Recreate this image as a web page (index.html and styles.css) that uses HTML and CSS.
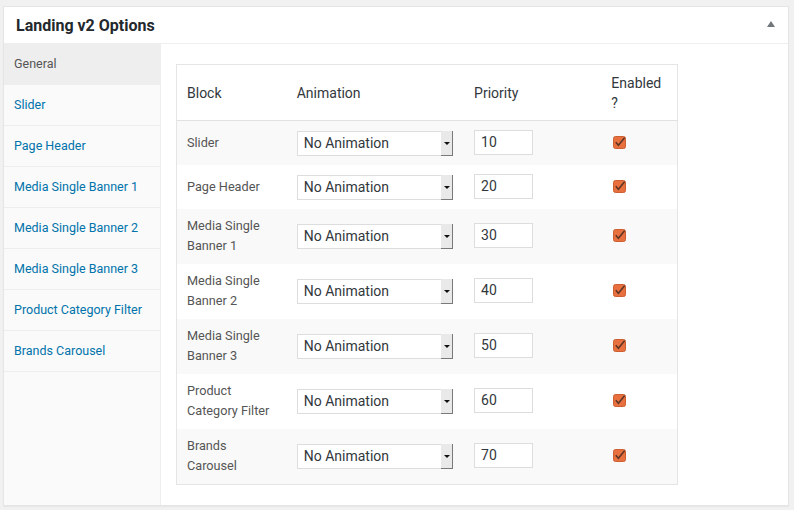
FILE: index.html
```html
<!DOCTYPE html>
<html>
<head>
<meta charset="utf-8">
<link rel="stylesheet" href="styles.css">
</head>
<body>
<div class="postbox">
  <div class="postbox-header">
    <h2 class="postbox-title">Landing v2 Options</h2>
    <span class="toggle-arrow"></span>
  </div>
  <div class="postbox-body">
    <ul class="tabs">
      <li class="tab active">General</li>
      <li class="tab">Slider</li>
      <li class="tab">Page Header</li>
      <li class="tab">Media Single Banner 1</li>
      <li class="tab">Media Single Banner 2</li>
      <li class="tab">Media Single Banner 3</li>
      <li class="tab">Product Category Filter</li>
      <li class="tab">Brands Carousel</li>
    </ul>
    <div class="panel">
      <table class="blocks">
        <thead>
          <tr>
            <th class="c-block">Block</th>
            <th class="c-anim">Animation</th>
            <th class="c-prio">Priority</th>
            <th class="c-en">Enabled ?</th>
          </tr>
        </thead>
        <tbody>
          <tr class="short"><td class="name">Slider</td><td><div class="fake-select"><span class="sel-text">No Animation</span><span class="sel-btn"></span></div></td><td><div class="num">10</div></td><td><svg class="check" width="13" height="13" viewBox="0 0 13 13"><rect x="0.5" y="0.5" width="12" height="12" rx="2" fill="#e8703e" stroke="#cd5f31"/><path d="M2.8 6.2 L5.4 9.2 L11.6 1.8" fill="none" stroke="#5e3526" stroke-width="1.6"/></svg></td></tr>
          <tr class="short"><td class="name">Page Header</td><td><div class="fake-select"><span class="sel-text">No Animation</span><span class="sel-btn"></span></div></td><td><div class="num">20</div></td><td><svg class="check" width="13" height="13" viewBox="0 0 13 13"><rect x="0.5" y="0.5" width="12" height="12" rx="2" fill="#e8703e" stroke="#cd5f31"/><path d="M2.8 6.2 L5.4 9.2 L11.6 1.8" fill="none" stroke="#5e3526" stroke-width="1.6"/></svg></td></tr>
          <tr><td class="name">Media Single Banner 1</td><td><div class="fake-select"><span class="sel-text">No Animation</span><span class="sel-btn"></span></div></td><td><div class="num">30</div></td><td><svg class="check" width="13" height="13" viewBox="0 0 13 13"><rect x="0.5" y="0.5" width="12" height="12" rx="2" fill="#e8703e" stroke="#cd5f31"/><path d="M2.8 6.2 L5.4 9.2 L11.6 1.8" fill="none" stroke="#5e3526" stroke-width="1.6"/></svg></td></tr>
          <tr><td class="name">Media Single Banner 2</td><td><div class="fake-select"><span class="sel-text">No Animation</span><span class="sel-btn"></span></div></td><td><div class="num">40</div></td><td><svg class="check" width="13" height="13" viewBox="0 0 13 13"><rect x="0.5" y="0.5" width="12" height="12" rx="2" fill="#e8703e" stroke="#cd5f31"/><path d="M2.8 6.2 L5.4 9.2 L11.6 1.8" fill="none" stroke="#5e3526" stroke-width="1.6"/></svg></td></tr>
          <tr><td class="name">Media Single Banner 3</td><td><div class="fake-select"><span class="sel-text">No Animation</span><span class="sel-btn"></span></div></td><td><div class="num">50</div></td><td><svg class="check" width="13" height="13" viewBox="0 0 13 13"><rect x="0.5" y="0.5" width="12" height="12" rx="2" fill="#e8703e" stroke="#cd5f31"/><path d="M2.8 6.2 L5.4 9.2 L11.6 1.8" fill="none" stroke="#5e3526" stroke-width="1.6"/></svg></td></tr>
          <tr><td class="name">Product Category Filter</td><td><div class="fake-select"><span class="sel-text">No Animation</span><span class="sel-btn"></span></div></td><td><div class="num">60</div></td><td><svg class="check" width="13" height="13" viewBox="0 0 13 13"><rect x="0.5" y="0.5" width="12" height="12" rx="2" fill="#e8703e" stroke="#cd5f31"/><path d="M2.8 6.2 L5.4 9.2 L11.6 1.8" fill="none" stroke="#5e3526" stroke-width="1.6"/></svg></td></tr>
          <tr><td class="name">Brands Carousel</td><td><div class="fake-select"><span class="sel-text">No Animation</span><span class="sel-btn"></span></div></td><td><div class="num">70</div></td><td><svg class="check" width="13" height="13" viewBox="0 0 13 13"><rect x="0.5" y="0.5" width="12" height="12" rx="2" fill="#e8703e" stroke="#cd5f31"/><path d="M2.8 6.2 L5.4 9.2 L11.6 1.8" fill="none" stroke="#5e3526" stroke-width="1.6"/></svg></td></tr>
        </tbody>
      </table>
    </div>
  </div>
</div>
</body>
</html>
```

FILE: styles.css
```css
html, body {
  margin: 0;
  padding: 0;
  background: #f1f1f1;
}
body {
  padding: 6px 5px 4px 3px;
  font-family: Roboto, "Liberation Sans", sans-serif;
  color: #444;
}
.postbox {
  background: #fff;
  border: 1px solid #e5e5e5;
  box-shadow: 0 1px 1px rgba(0,0,0,0.04);
}
.postbox-header {
  height: 36px;
  display: flex;
  align-items: center;
  justify-content: space-between;
  padding: 0 13px 0 12px;
  border-bottom: 1px solid #eee;
}
.postbox-title {
  margin: 0;
  font-size: 16px;
  font-weight: 700;
  color: #23282d;
  letter-spacing: 0;
}
.toggle-arrow {
  width: 0;
  height: 0;
  border-left: 4px solid transparent;
  border-right: 4px solid transparent;
  border-bottom: 6px solid #72777c;
  margin-top: -2px;
}
.postbox-body {
  display: flex;
}
.tabs {
  list-style: none;
  margin: 0;
  padding: 0;
  width: 156px;
  background: #fafafa;
  border-right: 1px solid #eee;
  flex: none;
}
.tab {
  height: 40px;
  line-height: 40px;
  padding-left: 10px;
  font-size: 12.5px;
  color: #0073aa;
  border-bottom: 1px solid #eee;
}
.tab.active {
  background: #eee;
  color: #555;
  border-bottom-color: #eee;
}
.panel {
  flex: 1;
  padding: 20px 15px 20px 15px;
}
.blocks {
  border-collapse: collapse;
  border: 1px solid #e5e5e5;
  table-layout: fixed;
  width: 502px;
  font-size: 12.7px;
}
.blocks th {
  height: 56px;
  box-sizing: border-box;
  text-align: left;
  font-weight: 400;
  font-size: 14px;
  color: #32373c;
  line-height: 20px;
  padding: 7px 10px;
  border-bottom: 1px solid #e1e1e1;
}
.c-block { width: 110px; }
.c-anim { width: 177px; }
.c-prio { width: 137px; }
.c-en { width: 76px; }
.blocks td {
  padding: 7px 10px 8px 10px;
  line-height: 20px;
  vertical-align: middle;
  color: #555;
}
.blocks tbody tr:nth-child(odd) {
  background: #f9f9f9;
}
.blocks tr.short {
  height: 44px;
}
.blocks tr.short td {
  padding-top: 0;
  padding-bottom: 0;
}
.fake-select {
  display: flex;
  align-items: stretch;
  width: 156px;
  height: 25px;
  box-sizing: border-box;
  border: 1px solid #ddd;
  background: #fff;
  margin-top: 1px;
}
.sel-text {
  flex: 1;
  padding-left: 6px;
  font-size: 14px;
  line-height: 23px;
  color: #32373c;
}
.sel-btn {
  width: 11px;
  background: #e9e9e9;
  border-right: 1px solid #7a7a7a;
  border-bottom: 1px solid #7a7a7a;
  margin: -1px -1px -1px 0;
  position: relative;
}
.sel-btn::after {
  content: "";
  position: absolute;
  left: 3px;
  top: 11px;
  border-left: 3px solid transparent;
  border-right: 3px solid transparent;
  border-top: 3px solid #111;
}
.num {
  width: 59px;
  height: 25px;
  box-sizing: border-box;
  border: 1px solid #ddd;
  background: #fff;
  padding-left: 6px;
  font-size: 14px;
  line-height: 23px;
  color: #32373c;
}
.check {
  display: block;
  margin-left: 2px;
}
```
